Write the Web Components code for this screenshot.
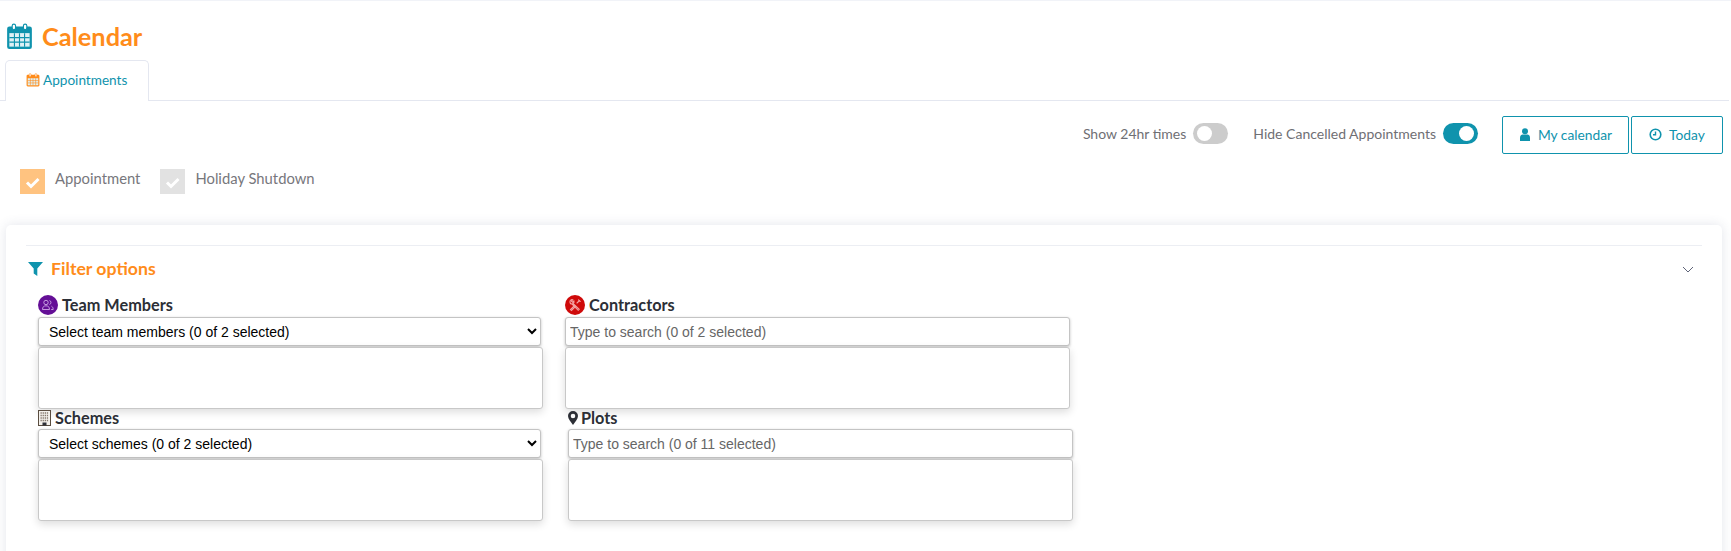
<!DOCTYPE html>
<html>
<head>
<meta charset="utf-8">
<title>Calendar</title>
<style>
  html, body { margin: 0; padding: 0; background: #fff; }
  body { font-family: Lato, "Open Sans", sans-serif; height: 551px; overflow: hidden; border-top: 1px solid #f1f3f8; box-sizing: border-box; }
</style>
</head>
<body>
<calendar-page></calendar-page>

<script>
const CAL_ICON = (c, s) => `
  <svg width="${s}" height="${s}" viewBox="0 0 24 24" aria-hidden="true">
    <rect x="1" y="3" width="22" height="20" rx="2" fill="${c}"/>
    <rect x="3" y="9" width="18" height="12" fill="#dff1f5"/>
    <path d="M3 13h18M3 17h18M7.500 9v12M12 9v12M16.500 9v12" stroke="${c}" stroke-width="1"/>
    <rect x="5.500" y="1" width="3" height="5" rx="1.500" fill="#fff" stroke="${c}"/>
    <rect x="15.500" y="1" width="3" height="5" rx="1.500" fill="#fff" stroke="${c}"/>
  </svg>`;

class PageHeader extends HTMLElement {
  constructor() {
    super();
    this.attachShadow({ mode: 'open' });
    this.shadowRoot.innerHTML = `
      <style>
        :host { display: flex; align-items: center; height: 59px; padding-left: 6px; box-sizing: border-box; padding-top: 11px; }
        svg { display: block; margin-right: 9px; }
        h1 { margin: 0; font: 700 25.3px/30px Lato, sans-serif; color: #ff8c1a; }
      </style>
      ${CAL_ICON('#0f93ad', 27)}
      <h1><slot></slot></h1>`;
  }
}
customElements.define('page-header', PageHeader);

class TabStrip extends HTMLElement {
  constructor() {
    super();
    this.attachShadow({ mode: 'open' });
    this.shadowRoot.innerHTML = `
      <style>
        :host { display: block; border-bottom: 1px solid #e4e7f0; height: 40px; margin-right: 2px; box-sizing: content-box; }
        .tab { display: inline-flex; align-items: center; gap: 3px; box-sizing: border-box; height: 41px; width: 144px; margin-left: 5px; padding: 0 0 3px 20px; background: #fff; border: 1px solid #e4e7f0; border-bottom: 0; border-radius: 5px 5px 0 0; color: #0f93ad; font-size: 13.6px; }
      </style>
      <div class="tab">${CAL_ICON('#ff8c1a', 14)}<slot></slot></div>`;
  }
}
customElements.define('tab-strip', TabStrip);

class ToggleSwitch extends HTMLElement {
  constructor() {
    super();
    this.attachShadow({ mode: 'open' });
    const on = this.hasAttribute('on');
    this.shadowRoot.innerHTML = `
      <style>
        :host { display: inline-flex; align-items: center; gap: 7px; color: #6f6f74; font-size: 14px; }
        .track { width: 35px; height: 21px; border-radius: 11px; background: ${on ? '#0f93ad' : '#ccc'}; position: relative; }
        .knob { position: absolute; top: 3px; ${on ? 'right' : 'left'}: 4px; width: 15px; height: 15px; border-radius: 50%; background: #fff; }
      </style>
      <slot></slot>
      <span class="track"><span class="knob"></span></span>`;
  }
}
customElements.define('toggle-switch', ToggleSwitch);

class OutlineButton extends HTMLElement {
  constructor() {
    super();
    this.attachShadow({ mode: 'open' });
    this.shadowRoot.innerHTML = `
      <style>
        :host { display: inline-flex; align-items: center; justify-content: center; gap: 7px; box-sizing: border-box; height: 38px; padding-bottom: 2px; border: 1px solid #0f93ad; border-radius: 2px; color: #0f93ad; font-size: 13.8px; }
      </style>
      <slot name="icon"></slot><slot></slot>`;
  }
}
customElements.define('outline-button', OutlineButton);

class ToolBar extends HTMLElement {
  constructor() {
    super();
    this.attachShadow({ mode: 'open' });
    this.shadowRoot.innerHTML = `
      <style>
        :host { display: flex; justify-content: flex-end; align-items: flex-start; padding: 15px 8px 0 0; height: 39px; }
        .sw { display: flex; gap: 25px; margin: 7px 24px 0 0; }
        .btns { display: flex; gap: 2px; }
        outline-button.a { width: 127px; }
        outline-button.b { width: 92px; }
      </style>
      <div class="sw">
        <toggle-switch>Show 24hr times</toggle-switch>
        <toggle-switch on>Hide Cancelled Appointments</toggle-switch>
      </div>
      <div class="btns">
        <outline-button class="a">
          <svg slot="icon" width="12" height="13" viewBox="0 0 12 13"><circle cx="6" cy="3.200" r="3" fill="#0f93ad"/><path d="M1 13V9.500C1 7.500 2.500 6.500 3.500 6.500h5C9.500 6.500 11 7.500 11 9.500V13z" fill="#0f93ad"/></svg>
          My calendar
        </outline-button>
        <outline-button class="b">
          <svg slot="icon" width="13" height="13" viewBox="0 0 13 13"><circle cx="6.500" cy="6.500" r="5.300" fill="none" stroke="#0f93ad" stroke-width="1.600"/><path d="M6.500 3.500v3.300H4" fill="none" stroke="#0f93ad" stroke-width="1.400"/></svg>
          Today
        </outline-button>
      </div>`;
  }
}
customElements.define('tool-bar', ToolBar);

class LegendItem extends HTMLElement {
  constructor() {
    super();
    this.attachShadow({ mode: 'open' });
    const c = this.getAttribute('color');
    this.shadowRoot.innerHTML = `
      <style>
        :host { display: inline-flex; align-items: flex-start; gap: 10px; color: #77777c; font-size: 14.8px; line-height: 18px; }
        .box { width: 25px; height: 25px; background: ${c}; display: block; }
      </style>
      <svg class="box" viewBox="0 0 25 25"><path d="M7 13.500l4 4 7.500-7.500" fill="none" stroke="#fff" stroke-width="3"/></svg>
      <slot></slot>`;
  }
}
customElements.define('legend-item', LegendItem);

class PickerField extends HTMLElement {
  constructor() {
    super();
    this.attachShadow({ mode: 'open' });
    const mode = this.getAttribute('mode');
    const text = this.getAttribute('text');
    const control = mode === 'select'
      ? `<select><option>${text}</option></select>`
      : `<input type="text" placeholder="${text}">`;
    this.shadowRoot.innerHTML = `
      <style>
        :host { display: block; width: 505px; font-family: "Liberation Sans", Arial, sans-serif; }
        .label { display: flex; align-items: center; gap: 4px; box-sizing: border-box; height: var(--label-h, 23px); padding-bottom: 2px; font: 700 16.3px/20px Lato, sans-serif; color: #2c2f36; }
        select, input { display: block; box-sizing: border-box; height: 29px; margin: 0; font: 14px "Liberation Sans", Arial, sans-serif; border: 1px solid #c4c4c4; border-radius: 3px; background: #fff; box-shadow: 0 1px 3px rgba(0,0,0,.25); outline: 0; color: #000; }
        select { width: 503px; padding-left: 6px; }
        input { width: 505px; padding-left: 4px; }
        input::placeholder { color: #666; opacity: 1; }
        .list { box-sizing: border-box; width: 505px; height: 62px; margin-top: 1px; border: 1px solid #c8c8c8; border-radius: 3px; background: #fff; box-shadow: 0 3px 8px rgba(0,0,0,.14); }
      </style>
      <div class="label"><slot name="icon"></slot><slot></slot></div>
      ${control}
      <div class="list"></div>`;
  }
}
customElements.define('picker-field', PickerField);

class FilterCard extends HTMLElement {
  constructor() {
    super();
    this.attachShadow({ mode: 'open' });
    this.shadowRoot.innerHTML = `
      <style>
        :host { display: block; box-sizing: border-box; height: 340px; margin: 0 9px 0 6px; padding: 20px 20px 0 20px; background: #fff; border-radius: 5px; box-shadow: 0 0 12px rgba(60,70,110,.14); }
        .head { display: flex; align-items: center; box-sizing: border-box; border-top: 1px solid #eceef3; height: 49px; padding: 0 0 2px 2px; }
        .head svg.f { margin-right: 8px; }
        .head span { font: 700 17.7px/20px Lato, sans-serif; color: #ff8c1a; flex: 1; }
        .head svg.c { margin-right: 8px; }
        .row { display: flex; margin-left: 12px; }
        .row.one { gap: 22px; }
        .row.two { gap: 25px; }
      </style>
      <div class="head">
        <svg class="f" width="15" height="14" viewBox="0 0 15 14"><path d="M0 0h15L9.300 6.500V14L5.700 11.500V6.500z" fill="#0f93ad"/></svg>
        <span>Filter options</span>
        <svg class="c" width="12" height="7" viewBox="0 0 12 7"><path d="M1 1l5 5 5-5" fill="none" stroke="#5f6478" stroke-width="1"/></svg>
      </div>
      <div class="row one"><slot name="top"></slot></div>
      <div class="row two"><slot name="bottom"></slot></div>`;
  }
}
customElements.define('filter-card', FilterCard);

class CalendarPage extends HTMLElement {
  constructor() {
    super();
    this.attachShadow({ mode: 'open' });
    this.shadowRoot.innerHTML = `
      <style>
        :host { display: block; font-family: Lato, sans-serif; }
        .legend { display: flex; gap: 20px; padding: 14px 0 0 20px; height: 56px; }
        .ic { display: block; flex: none; }
        picker-field[slot="bottom"] { --label-h: 20px; }
      </style>
      <page-header>Calendar</page-header>
      <tab-strip>Appointments</tab-strip>
      <tool-bar></tool-bar>
      <div class="legend">
        <legend-item color="#ffc380">Appointment</legend-item>
        <legend-item color="#e2e2e2">Holiday Shutdown</legend-item>
      </div>
      <filter-card>
        <picker-field slot="top" mode="select" text="Select team members (0 of 2 selected)">
          <svg class="ic" slot="icon" width="20" height="20" viewBox="0 0 20 20"><circle cx="10" cy="10" r="10" fill="#640f96"/><g fill="none" stroke="#cfa9e6" stroke-width=".9"><circle cx="8" cy="7.500" r="2.200"/><path d="M4.500 14.500c0-2.500 1.300-3.700 3.500-3.700s3.500 1.200 3.500 3.700z"/><path d="M11.500 5.500a2.100 2.100 0 0 1 0 4M13.500 11.200c1 .6 1.700 1.600 1.700 3.300h-2"/></g></svg>
          Team Members
        </picker-field>
        <picker-field slot="top" mode="input" text="Type to search (0 of 2 selected)">
          <svg class="ic" slot="icon" width="20" height="20" viewBox="0 0 20 20"><circle cx="10" cy="10" r="10" fill="#cf0a0a"/><g fill="none" stroke="#f2a3a3" stroke-width="1.100" stroke-linecap="round"><path d="M5.500 14.500l1 1 4-4-1-1zM12 8l2.500-2.500"/><path d="M13.500 4.800l1.700 1.700"/><path d="M5 7a2 2 0 0 1 2.700-2.200L6.500 6.200l1 1 1.400-1.200A2 2 0 0 1 8 8.500l6.200 5.800-1 1L7 9a2 2 0 0 1-2-2z"/></g></svg>
          Contractors
        </picker-field>
        <picker-field slot="bottom" mode="select" text="Select schemes (0 of 2 selected)">
          <svg class="ic" slot="icon" width="13" height="16" viewBox="0 0 13 16"><rect x=".5" y=".5" width="12" height="15" fill="#f4f1ec" stroke="#5a4d40"/><path d="M2.500 3h8M2.500 5.500h8M2.500 8h8M2.500 10.500h8" stroke="#85796e" stroke-width="1.300" stroke-dasharray="1.300 .8"/><rect x="4.500" y="12.500" width="4" height="3" fill="#2c2f36"/></svg>
          Schemes
        </picker-field>
        <picker-field slot="bottom" mode="input" text="Type to search (0 of 11 selected)">
          <svg class="ic" slot="icon" style="margin-right:-1px" width="10" height="14" viewBox="0 0 10 14"><path fill-rule="evenodd" d="M5 0a5 5 0 0 1 5 5c0 3-3 6-5 9C3 11 0 8 0 5a5 5 0 0 1 5-5zm0 2.700a2.300 2.300 0 1 0 0 4.600 2.300 2.300 0 0 0 0-4.600z" fill="#2c2f36"/></svg>
          Plots
        </picker-field>
      </filter-card>`;
  }
}
customElements.define('calendar-page', CalendarPage);
</script>
</body>
</html>
